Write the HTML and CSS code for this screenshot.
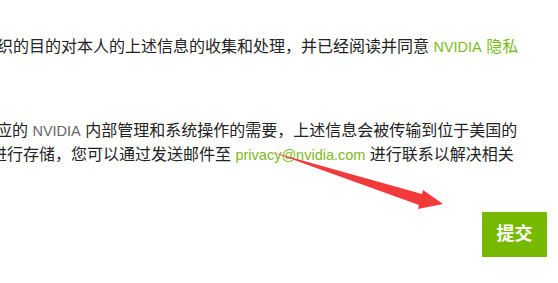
FILE: index.html
```html
<!DOCTYPE html>
<html>
<head>
  <meta charset="utf-8">
  <title>隐私声明</title>
  <link rel="stylesheet" href="styles.css">
</head>
<body>
  <div class="form">
    <p class="line agree">织的目的对本人的上述信息的收集和处理，并已经阅读并同意 <a class="link latin" href="#">NVIDIA</a> <a class="link" href="#">隐私</a></p>

    <div class="notice">
      <p class="line first">应的 <span class="brand latin">NVIDIA</span> 内部管理和系统操作的需要，上述信息会被传输到位于美国的</p>
      <p class="line second">进行存储，您可以通过发送邮件至 <a class="link latin" href="#">privacy@nvidia.com</a> 进行联系以解决相关</p>
    </div>

    <div class="actions">
      <button type="button" class="submit">提交</button>
    </div>
  </div>

  <!-- annotation arrow drawn over the page -->
  <svg class="arrow" width="558" height="283" viewBox="0 0 558 283">
    <polygon points="272,152 422,194 423,190 443,204 418,209 419,205" fill="#f23a3a"/>
  </svg>
</body>
</html>
```

FILE: styles.css
```css
html, body {
  margin: 0;
  padding: 0;
  background: #fff;
  overflow: hidden;
}
body {
  position: relative;
  width: 558px;
  height: 283px;
  font-family: "Liberation Sans", "Noto Sans CJK SC", sans-serif;
  font-size: 16px;
  color: #222;
}
.form {
  padding-top: 35px;
}
.line {
  margin: 0;
  line-height: 24px;
  white-space: nowrap;
}
.agree {
  margin-left: -3px;
}
.notice {
  margin-top: 60px;
}
.first {
  margin-left: -4px;
}
.second {
  margin-left: -9px;
}
.latin {
  font-size: 14.5px;
}
.link {
  color: #7cbb1c;
  text-decoration: none;
}
.brand {
  color: #666;
}
.actions {
  display: flex;
  justify-content: flex-end;
  padding-right: 11px;
  margin-top: 45px;
}
.submit {
  width: 65px;
  height: 45px;
  border: none;
  border-radius: 0;
  background: #76b900;
  color: #fff;
  font-family: "Noto Sans CJK SC", sans-serif;
  font-size: 18px;
  font-weight: bold;
  line-height: 41px;
  padding: 0 0 4px;
  cursor: pointer;
}
/* Arrow overlay */
.arrow {
  position: absolute;
  top: 0;
  left: 0;
  pointer-events: none;
}
```
